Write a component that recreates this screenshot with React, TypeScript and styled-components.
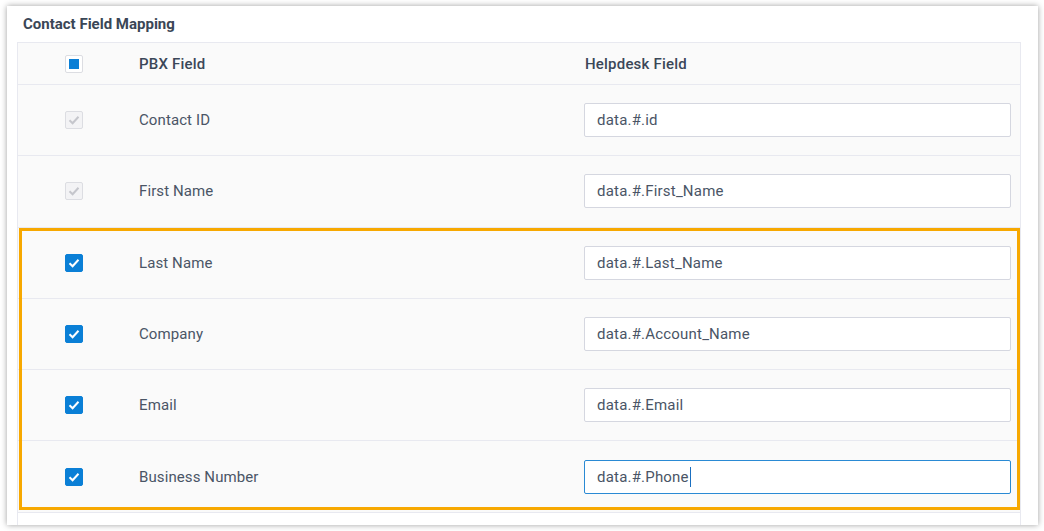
import styled, { createGlobalStyle } from 'styled-components';

const rows = [
  { name: 'Contact ID', field: 'data.#.id', locked: true },
  { name: 'First Name', field: 'data.#.First_Name', locked: true },
  { name: 'Last Name', field: 'data.#.Last_Name', locked: false },
  { name: 'Company', field: 'data.#.Account_Name', locked: false },
  { name: 'Email', field: 'data.#.Email', locked: false },
  { name: 'Business Number', field: 'data.#.Phone', locked: false },
];

function Checkbox({ state }: { state: 'checked' | 'disabled' | 'partial' }) {
  return (
    <Box $state={state}>
      {state === 'partial' ? (
        <span className='dot' />
      ) : (
        <svg width='12' height='10' viewBox='0 0 12 10'>
          <path d='M1.5 5.2 4.6 8.2 10.5 1.8' fill='none' stroke='currentColor' strokeWidth='2' />
        </svg>
      )}
    </Box>
  );
}

function Row({ name, field, locked, focused }: { name: string; field: string; locked: boolean; focused?: boolean }) {
  return (
    <TableRow>
      <CheckCell>
        <Checkbox state={locked ? 'disabled' : 'checked'} />
      </CheckCell>
      <NameCell>{name}</NameCell>
      <FieldCell>
        <FieldBox $focused={focused}>
          {field}
          {focused && <Caret />}
        </FieldBox>
      </FieldCell>
    </TableRow>
  );
}

export default function App() {
  return (
    <>
      <GlobalStyle />
      <Page>
        <Card>
          <Title>Contact Field Mapping</Title>
          <Table>
            <HeadRow>
              <CheckCell>
                <Checkbox state='partial' />
              </CheckCell>
              <HeadCell>PBX Field</HeadCell>
              <HeadCell>Helpdesk Field</HeadCell>
            </HeadRow>
            {rows.slice(0, 2).map((r) => (
              <Row key={r.name} {...r} />
            ))}
            <Highlight>
              {rows.slice(2).map((r, i) => (
                <Row key={r.name} {...r} focused={i === 3} />
              ))}
            </Highlight>
            <Filler />
          </Table>
        </Card>
      </Page>
    </>
  );
}

const GlobalStyle = createGlobalStyle`
  body {
    margin: 0;
    background: #ffffff;
    font-family: Roboto, 'Liberation Sans', sans-serif;
  }
`;

const Page = styled.div`
  padding: 6px 6px 6px 7px;
  height: 531px;
  box-sizing: border-box;
`;

const Card = styled.section`
  height: 519px;
  box-sizing: border-box;
  background: #ffffff;
  box-shadow: 0 0 6px rgba(0, 0, 0, 0.38);
  padding: 0 17px 0 10px;
  overflow: hidden;
`;

const Title = styled.h2`
  margin: 0;
  height: 36px;
  padding-left: 6px;
  display: flex;
  align-items: center;
  font-size: 15px;
  font-weight: 700;
  color: #3a4656;
`;

const Table = styled.div`
  border: 1px solid #e8e9f0;
  border-bottom: none;
  background: #fafafa;
`;

const Grid = styled.div`
  display: grid;
  grid-template-columns: 112px 454px 1fr;
  align-items: center;
  border-bottom: 1px solid #e8e9f0;
`;

const HeadRow = styled(Grid)`
  height: 41px;
`;

const TableRow = styled(Grid)`
  height: 70.3px;
`;

const CheckCell = styled.div`
  display: flex;
  justify-content: center;
`;

const HeadCell = styled.div`
  padding-left: 9px;
  font-size: 15px;
  font-weight: 500;
  letter-spacing: 0.2px;
  color: #3b4758;

  & + & {
    padding-left: 1px;
  }
`;

const NameCell = styled.div`
  padding-left: 9px;
  font-size: 15px;
  letter-spacing: 0.1px;
  color: #4a5566;
`;

const FieldCell = styled.div`
  padding-right: 9px;
`;

const FieldBox = styled.div<{ $focused?: boolean }>`
  display: flex;
  align-items: center;
  height: 34px;
  box-sizing: border-box;
  padding: 0 12px;
  border: 1px solid ${(p) => (p.$focused ? '#2a8ad4' : '#d5d7e0')};
  border-radius: 2px;
  background: #ffffff;
  font-size: 15px;
  letter-spacing: 0.2px;
  color: #4a5566;
`;

const Caret = styled.span`
  width: 1px;
  height: 20px;
  margin-left: 1px;
  background: #1a6fc0;
`;

const Box = styled.span<{ $state: 'checked' | 'disabled' | 'partial' }>`
  width: 18px;
  height: 18px;
  box-sizing: border-box;
  border-radius: 2px;
  display: flex;
  align-items: center;
  justify-content: center;
  border: 1px solid ${(p) => (p.$state === 'checked' ? '#0a7fd6' : '#dcdde2')};
  background: ${(p) => (p.$state === 'checked' ? '#0a7fd6' : p.$state === 'disabled' ? '#f3f3f5' : '#ffffff')};
  color: ${(p) => (p.$state === 'checked' ? '#ffffff' : '#c5c6cc')};

  .dot {
    width: 10px;
    height: 10px;
    background: #0a7fd6;
  }
`;

const Highlight = styled.div`
  position: relative;

  &::after {
    content: '';
    position: absolute;
    inset: 0 0 3px 1px;
    border: 3px solid #f7a800;
    pointer-events: none;
  }
`;

const Filler = styled.div`
  height: 40px;
  background: #ffffff;
`;
